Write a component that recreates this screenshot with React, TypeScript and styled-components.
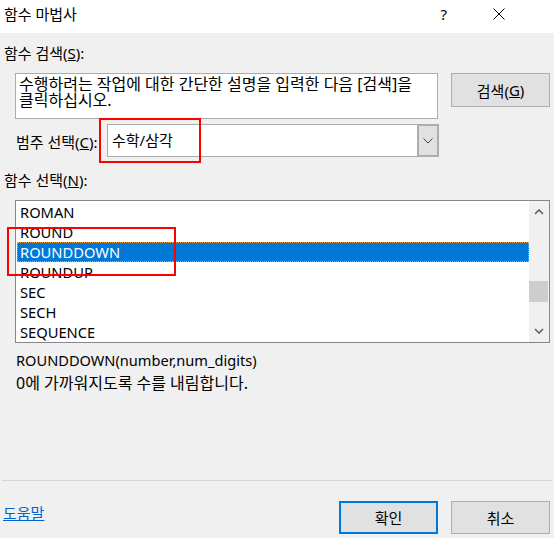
import React from "react";
import styled, { createGlobalStyle } from "styled-components";

const GlobalStyle = createGlobalStyle`
    html, body {
        margin: 0;
        padding: 0;
        background: #f0f0f0;
    }
    body {
        font-family: "Noto Sans", "Noto Sans CJK KR", sans-serif;
        font-size: 15px;
        color: #000;
    }
    * {
        box-sizing: border-box;
    }
`;

const functions = ["ROMAN", "ROUND", "ROUNDDOWN", "ROUNDUP", "SEC", "SECH", "SEQUENCE"];
const selectedName = "ROUNDDOWN";

const App = () => {
    return (
        <>
            <GlobalStyle />
            <Dialog>
                <TitleBar>
                    <Title>함수 마법사</Title>
                    <TitleActions>
                        <HelpMark>?</HelpMark>
                        <CloseButton>
                            <svg width="12" height="12" viewBox="0 0 12 12">
                                <path d="M0.5 0.5 L11.5 11.5 M11.5 0.5 L0.5 11.5" stroke="#000" strokeWidth="1" fill="none" />
                            </svg>
                        </CloseButton>
                    </TitleActions>
                </TitleBar>

                <Body>
                    <SectionLabel>
                        함수 검색(<u>S</u>):
                    </SectionLabel>
                    <SearchRow>
                        <SearchBox>
                            수행하려는 작업에 대한 간단한 설명을 입력한 다음 [검색]을 클릭하십시오.
                        </SearchBox>
                        <Button>
                            검색(<u>G</u>)
                        </Button>
                    </SearchRow>

                    <CategoryRow>
                        <CategoryLabel>
                            범주 선택(<u>C</u>):
                        </CategoryLabel>
                        <Select>
                            <SelectValue>수학/삼각</SelectValue>
                            <SelectArrow>
                                <svg width="10" height="6" viewBox="0 0 10 6">
                                    <path d="M0.5 0.5 L5 5 L9.5 0.5" stroke="#444" strokeWidth="1" fill="none" />
                                </svg>
                            </SelectArrow>
                            <Highlight $left={-9} $top={-7} $width={102} $height={45} />
                        </Select>
                    </CategoryRow>

                    <SectionLabel $gap={13}>
                        함수 선택(<u>N</u>):
                    </SectionLabel>

                    <ListBox>
                        <ListItems>
                            {functions.map((name) => (
                                <ListItem key={name} $selected={name === selectedName}>
                                    {name}
                                </ListItem>
                            ))}
                        </ListItems>
                        <ScrollBar>
                            <ScrollArrow>
                                <svg width="10" height="6" viewBox="0 0 10 6">
                                    <path d="M1 5 L5 1 L9 5" stroke="#606060" strokeWidth="1.6" fill="none" />
                                </svg>
                            </ScrollArrow>
                            <ScrollTrack>
                                <ScrollThumb />
                            </ScrollTrack>
                            <ScrollArrow>
                                <svg width="10" height="6" viewBox="0 0 10 6">
                                    <path d="M1 1 L5 5 L9 1" stroke="#606060" strokeWidth="1.6" fill="none" />
                                </svg>
                            </ScrollArrow>
                        </ScrollBar>
                        <Highlight $left={-9} $top={26} $width={169} $height={49} />
                    </ListBox>

                    <Syntax>ROUNDDOWN(number,num_digits)</Syntax>
                    <Description>0에 가까워지도록 수를 내림합니다.</Description>
                </Body>

                <Separator />

                <Footer>
                    <HelpLink>도움말</HelpLink>
                    <FooterButtons>
                        <Button $primary $height={33}>확인</Button>
                        <Button $height={33}>취소</Button>
                    </FooterButtons>
                </Footer>
            </Dialog>
        </>
    );
};

const Dialog = styled.div`
    width: 554px;
    height: 538px;
    display: flex;
    flex-direction: column;
    background: #f0f0f0;
    overflow: hidden;
`;

const TitleBar = styled.header`
    height: 33px;
    flex-shrink: 0;
    background: #fff;
    display: flex;
    align-items: center;
    justify-content: space-between;
    padding: 0 49px 0 4px;
`;

const Title = styled.span`
    font-size: 15px;
    line-height: 20px;
    margin-top: -6px;
`;

const TitleActions = styled.div`
    display: flex;
    align-items: center;
    gap: 46px;
    margin-top: -6px;
`;

const HelpMark = styled.span`
    font-size: 15px;
    line-height: 20px;
`;

const CloseButton = styled.span`
    display: flex;
    align-items: center;
`;

const Body = styled.main`
    flex: 1;
    display: flex;
    flex-direction: column;
    padding: 0 4px;
`;

const SectionLabel = styled.div<{ $gap?: number }>`
    height: 20px;
    line-height: 20px;
    margin-top: ${({ $gap }) => ($gap ?? 10)}px;
`;

const SearchRow = styled.div`
    display: flex;
    align-items: flex-start;
    gap: 13px;
    margin-top: 10px;
    padding-left: 11px;
`;

const SearchBox = styled.div`
    width: 424px;
    height: 46px;
    padding: 2px 3px;
    font-size: 16px;
    line-height: 16px;
    word-break: keep-all;
    background: #fff;
    border: 1px solid #acacac;
`;

const Button = styled.div<{ $primary?: boolean; $height?: number }>`
    width: 99px;
    height: ${({ $height }) => $height ?? 34}px;
    display: flex;
    align-items: center;
    justify-content: center;
    background: #e1e1e1;
    border: ${({ $primary }) => ($primary ? "2px solid #0078d7" : "1px solid #adadad")};
`;

const CategoryRow = styled.div`
    display: flex;
    align-items: center;
    margin-top: 5px;
    padding-left: 12px;
`;

const CategoryLabel = styled.span`
    width: 91px;
    line-height: 20px;
    margin-top: 3px;
`;

const Select = styled.div`
    position: relative;
    width: 332px;
    height: 33px;
    display: flex;
    background: #fff;
    border: 1px solid #acacac;
`;

const SelectValue = styled.span`
    flex: 1;
    padding-left: 4px;
    line-height: 31px;
`;

const SelectArrow = styled.span`
    width: 22px;
    margin: -1px -1px -1px 0;
    display: flex;
    align-items: center;
    justify-content: center;
    background: #e1e1e1;
    border: 2px solid #adadad;
`;

const Highlight = styled.div<{ $left: number; $top: number; $width: number; $height: number }>`
    position: absolute;
    left: ${({ $left }) => $left}px;
    top: ${({ $top }) => $top}px;
    width: ${({ $width }) => $width}px;
    height: ${({ $height }) => $height}px;
    border: 2px solid #ff0000;
    pointer-events: none;
`;

const ListBox = styled.div`
    position: relative;
    width: 535px;
    height: 143px;
    margin-top: 10px;
    margin-left: 11px;
    display: flex;
    background: #fff;
    border: 1px solid #828790;
`;

const ListItems = styled.ul`
    flex: 1;
    list-style: none;
    margin: 0;
    padding: 1px 0 0 1px;
    font-size: 14.7px;
`;

const ListItem = styled.li<{ $selected?: boolean }>`
    height: 20px;
    line-height: 20px;
    padding-left: 3px;
    color: ${({ $selected }) => ($selected ? "#fff" : "#000")};
    background: ${({ $selected }) => ($selected ? "#0078d7" : "transparent")};
    outline: ${({ $selected }) => ($selected ? "1px dotted #f0a040" : "none")};
    outline-offset: -1px;
`;

const ScrollBar = styled.div`
    width: 20px;
    display: flex;
    flex-direction: column;
    background: #f0f0f0;
`;

const ScrollArrow = styled.span`
    height: 22px;
    display: flex;
    align-items: center;
    justify-content: center;
`;

const ScrollTrack = styled.div`
    flex: 1;
    display: flex;
    flex-direction: column;
    justify-content: flex-end;
    padding-bottom: 18px;
`;

const ScrollThumb = styled.div`
    height: 21px;
    margin: 0 1px 0 0;
    background: #cdcdcd;
`;

const Syntax = styled.div`
    margin-top: 6px;
    padding-left: 12px;
    font-size: 14.6px;
    line-height: 23px;
`;

const Description = styled.div`
    padding-left: 12px;
    font-size: 16px;
    line-height: 23px;
`;

const Separator = styled.hr`
    flex-shrink: 0;
    margin: 0 2px;
    border: none;
    border-top: 1px solid #d5d5d5;
`;

const Footer = styled.footer`
    height: 57px;
    flex-shrink: 0;
    display: flex;
    align-items: flex-start;
    justify-content: space-between;
    padding: 20px 4px 0 3px;
`;

const HelpLink = styled.a`
    margin-top: 2px;
    color: #0066cc;
    text-decoration: underline;
    line-height: 20px;
`;

const FooterButtons = styled.div`
    display: flex;
    gap: 13px;
`;

export default App;
